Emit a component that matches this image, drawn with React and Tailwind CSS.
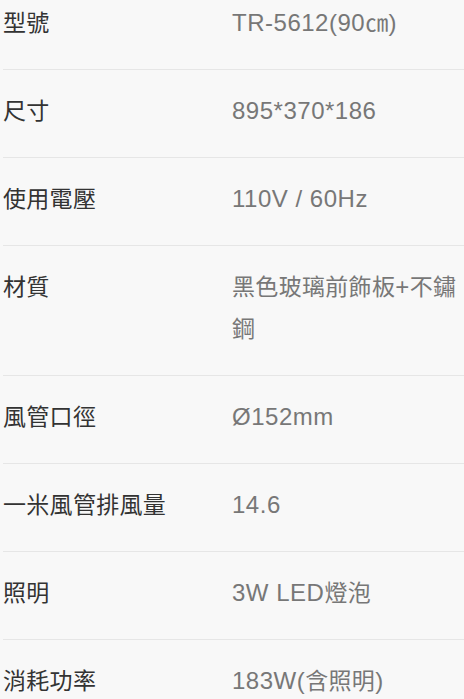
import React from 'react';

const specs = [
  { label: '型號', value: 'TR-5612(90㎝)' },
  { label: '尺寸', value: '895*370*186' },
  { label: '使用電壓', value: '110V / 60Hz' },
  { label: '材質', value: '黑色玻璃前飾板+不鏽鋼' },
  { label: '風管口徑', value: 'Ø152mm' },
  { label: '一米風管排風量', value: '14.6' },
  { label: '照明', value: '3W LED燈泡' },
  { label: '消耗功率', value: '183W(含照明)' },
];

// CJK glyphs sit a touch smaller than the latin run in the original
function MixedText({ text }) {
  return Array.from(text).map((ch, i) =>
    /[\u3000-\u9fff]/.test(ch) ? (
      <span key={i} className="text-[23px] tracking-[0.3px]">
        {ch}
      </span>
    ) : (
      <span key={i}>{ch}</span>
    )
  );
}

export default function App() {
  return (
    <div
      className="min-h-[699px] bg-[#f8f8f8] pl-[3px] overflow-hidden"
      style={{ fontFamily: '"Liberation Sans", "Noto Sans CJK TC", sans-serif' }}
    >
      {specs.map((row, i) => (
        <div
          key={row.label}
          className={`grid grid-cols-[229px_1fr] border-b border-[#e6e6e6] pb-[25px] ${
            i === 0 ? 'pt-[2px]' : 'pt-[20px]'
          }`}
        >
          <div className="text-[23px] leading-[42px] tracking-[0.3px] text-[#333333]">
            {row.label}
          </div>
          <div className="text-[24px] leading-[42px] tracking-[0.5px] text-[#777777]">
            <MixedText text={row.value} />
          </div>
        </div>
      ))}
    </div>
  );
}
